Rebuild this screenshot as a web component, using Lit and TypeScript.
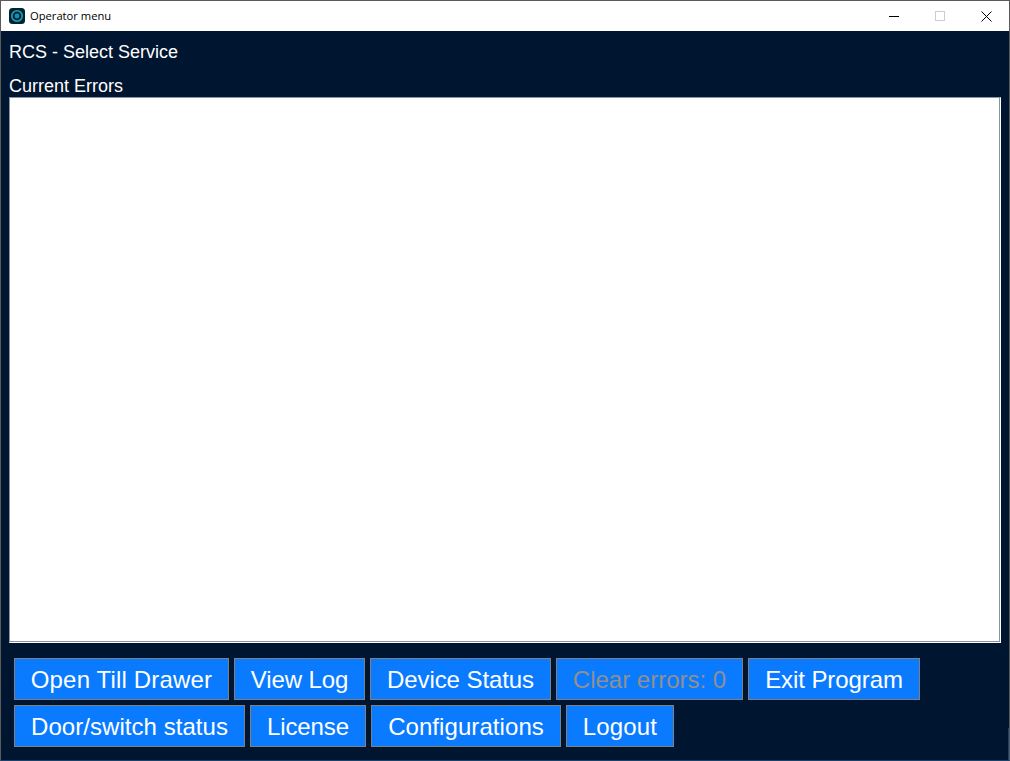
import { LitElement, html, css } from "lit";
import { customElement } from "lit/decorators.js";

const ROWS = [
  [
    { label: "Open Till Drawer", width: 215, spacing: 0.17 },
    { label: "View Log", width: 131, spacing: -0.1 },
    { label: "Device Status", width: 181, spacing: -0.08 },
    { label: "Clear errors: 0", width: 187, spacing: 0, disabled: true },
    { label: "Exit Program", width: 172, spacing: -0.08 },
  ],
  [
    { label: "Door/switch status", width: 231, spacing: 0.05 },
    { label: "License", width: 116, spacing: -0.1 },
    { label: "Configurations", width: 190, spacing: 0.07 },
    { label: "Logout", width: 108, spacing: 0.15 },
  ],
];

@customElement("app-root")
export class AppRoot extends LitElement {
  static styles = css`
    :host { display: block; width: 1010px; height: 761px; box-sizing: border-box; border: 1px solid #5a5a5a; border-bottom-color: #1a4070; background: #00152f; font-family: "Liberation Sans", Arial, sans-serif; overflow: hidden; }
    .win { display: flex; flex-direction: column; height: 100%; position: relative; }
    .corner { position: absolute; right: 0; bottom: 0; width: 1px; height: 32px; background: #1a4070; }
    .title { height: 30px; background: #fff; display: flex; align-items: center; flex: none; }
    .logo { margin-left: 8px; width: 16px; height: 16px; display: block; }
    .tt { margin-left: 5px; font: 11.2px/14px "Open Sans", "Noto Sans", sans-serif; color: #000; flex: 1; margin-bottom: 1px; }
    .wb { width: 46px; height: 30px; display: flex; align-items: center; justify-content: center; }
    .body { flex: 1; display: flex; flex-direction: column; padding: 0 8px; min-height: 0; }
    .h1 { color: #fff; font-size: 18px; line-height: 21px; margin-top: 11px; }
    .h2 { color: #fff; font-size: 18px; line-height: 21px; margin-top: 13px; }
    .box { height: 546px; box-sizing: border-box; background: #fff; border: 1px solid #8a93a0; border-right-color: #fff; border-bottom-color: #fff; box-shadow: inset -1px -1px 0 #8a93a0; }
    .rows { padding: 15px 0 0 5px; display: flex; flex-direction: column; gap: 5px; }
    .row { display: flex; gap: 5px; }
    button { height: 42px; box-sizing: border-box; padding: 2px 0 0; background: #0a7bff; border: 1px solid #808080; color: #fff; font: 24px "Liberation Sans", Arial, sans-serif; flex: none; }
    button[disabled] { color: #909090; }
  `;
  render() {
    return html`<div class="win">
      <div class="title">
        <svg class="logo" viewBox="0 0 16 16"><rect width="16" height="16" rx="3.5" fill="#04222e"/><circle cx="8" cy="8" r="5.2" fill="none" stroke="#12a5c8" stroke-width="1.6"/><circle cx="8" cy="8" r="2.4" fill="#1a8fa8"/></svg>
        <span class="tt">Operator menu</span>
        <span class="wb"><svg width="10" height="10"><path d="M0 5.5h10" stroke="#000"/></svg></span>
        <span class="wb"><svg width="10" height="10"><rect x=".5" y=".5" width="9" height="9" fill="none" stroke="#ccc"/></svg></span>
        <span class="wb"><svg width="11" height="11"><path d="M.5.5l10 10M10.500.5l-10 10" stroke="#000"/></svg></span>
      </div>
      <div class="body">
        <div class="h1">RCS - Select Service</div>
        <div class="h2">Current Errors</div>
        <div class="box"></div>
        <div class="rows">
          ${ROWS.map(
            (row) => html`<div class="row">
              ${row.map(
                (b) => html`<button ?disabled=${!!(b as { disabled?: boolean }).disabled} style="width:${b.width}px;letter-spacing:${b.spacing}px">${b.label}</button>`
              )}
            </div>`
          )}
        </div>
      </div>
      <div class="corner"></div>
    </div>`;
  }
}
